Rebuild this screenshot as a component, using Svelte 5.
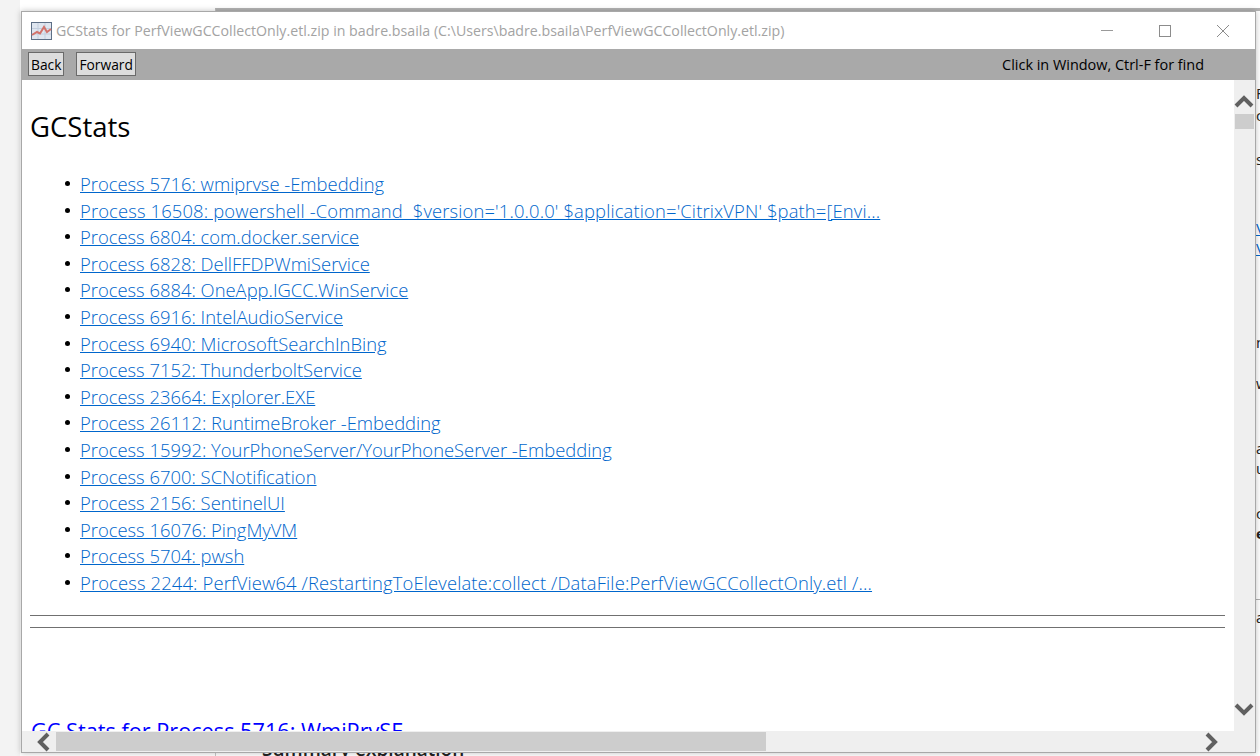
<script lang="ts">
  const processes = [
    "Process 5716: wmiprvse -Embedding",
    "Process 16508: powershell -Command \u00a0$version='1.0.0.0' $application='CitrixVPN' $path=[Envi...",
    "Process 6804: com.docker.service",
    "Process 6828: DellFFDPWmiService",
    "Process 6884: OneApp.IGCC.WinService",
    "Process 6916: IntelAudioService",
    "Process 6940: MicrosoftSearchInBing",
    "Process 7152: ThunderboltService",
    "Process 23664: Explorer.EXE",
    "Process 26112: RuntimeBroker -Embedding",
    "Process 15992: YourPhoneServer/YourPhoneServer -Embedding",
    "Process 6700: SCNotification",
    "Process 2156: SentinelUI",
    "Process 16076: PingMyVM",
    "Process 5704: pwsh",
    "Process 2244: PerfView64 /RestartingToElevelate:collect /DataFile:PerfViewGCCollectOnly.etl /...",
  ];

  // bits of the window behind that stick out on the right edge
  const peeks = [
    { y: 72, text: "F", cls: "" },
    { y: 94, text: "c", cls: "" },
    { y: 138, text: "s", cls: "" },
    { y: 207, text: "V", cls: "link" },
    { y: 227, text: "V", cls: "link" },
    { y: 321, text: "n", cls: "" },
    { y: 362, text: "w", cls: "" },
    { y: 427, text: "a", cls: "" },
    { y: 447, text: "u", cls: "" },
    { y: 492, text: "c", cls: "" },
    { y: 512, text: "e", cls: "bold" },
    { y: 596, text: "a", cls: "" },
  ];
</script>

<div class="desktop">
  <div class="back-left"></div>
  <div class="back-right">
    {#each peeks as p}
      <span class="peek {p.cls}" style="top: {p.y}px">{p.text}</span>
    {/each}
    <div class="back-rule"></div>
  </div>
  <div class="under-text">Summary explanation</div>

  <div class="window">
    <div class="titlebar">
      <svg class="app-icon" width="21" height="18" viewBox="0 0 21 18" aria-hidden="true">
        <rect x="0.5" y="0.5" width="20" height="17" fill="#dfe6f0" stroke="#5d6f86" />
        <path d="M1 6.500h19M1 12h19M7 1v16M14 1v16" stroke="#c3cede" fill="none" />
        <path d="M1 13l5-3 3 1.500 4-6.500 3 5 4-3" stroke="#d2736c" stroke-width="2" fill="none" />
      </svg>
      <span class="title">GCStats for PerfViewGCCollectOnly.etl.zip in badre.bsaila (C:\Users\badre.bsaila\PerfViewGCCollectOnly.etl.zip)</span>
      <div class="controls">
        <svg width="14" height="14" viewBox="0 0 14 14" aria-hidden="true"><path d="M1 6.500h12" stroke="#9a9a9a" /></svg>
        <svg width="14" height="14" viewBox="0 0 14 14" aria-hidden="true"><rect x="1.500" y="1.500" width="11" height="11" fill="none" stroke="#8c8c8c" /></svg>
        <svg width="14" height="14" viewBox="0 0 14 14" aria-hidden="true"><path d="M1 1l12 12M13 1L1 13" stroke="#8c8c8c" /></svg>
      </div>
    </div>

    <div class="toolbar">
      <button>Back</button>
      <button>Forward</button>
      <span class="hint">Click in Window, Ctrl-F for find</span>
    </div>

    <div class="main">
      <div class="content">
        <h2>GCStats</h2>
        <ul>
          {#each processes as name}
            <li class:long={name.length > 80}><a href="#p">{name}</a></li>
          {/each}
        </ul>
        <hr />
        <hr />
        <h3>GC Stats for Process 5716: WmiPrvSE</h3>
      </div>
      <div class="vscroll">
        <svg width="20" height="14" viewBox="0 0 20 14" aria-hidden="true"><path d="M2 12l8-8 8 8" class="chev" /></svg>
        <div class="vthumb"></div>
        <div class="spacer"></div>
        <svg width="20" height="14" viewBox="0 0 20 14" aria-hidden="true"><path d="M2 2l8 8 8-8" class="chev" /></svg>
      </div>
    </div>

    <div class="hscroll">
      <svg width="14" height="20" viewBox="0 0 14 20" aria-hidden="true"><path d="M12 2l-8 8 8 8" class="chev" /></svg>
      <div class="hthumb"></div>
      <div class="spacer"></div>
      <svg width="14" height="20" viewBox="0 0 14 20" aria-hidden="true"><path d="M2 2l8 8-8 8" class="chev" /></svg>
    </div>
  </div>
</div>

<style>
  :global(body) {
    margin: 0;
    background: #fff;
  }
  .desktop {
    position: relative;
    width: 1260px;
    height: 756px;
    overflow: hidden;
    background: #fff;
    font-family: "Open Sans", "Noto Sans", sans-serif;
  }
  .back-left {
    position: absolute;
    left: 0;
    top: 0;
    width: 20px;
    height: 756px;
    background: #f3f3f3;
  }
  .back-right {
    position: absolute;
    left: 215px;
    top: 8px;
    width: 1045px;
    height: 748px;
    border-top: 3px solid #b4b4b4;
    border-left: 1px solid #c8c8c8;
    box-sizing: border-box;
    background: #fff;
  }
  .peek {
    position: absolute;
    left: 1040px;
    font-size: 15px;
    line-height: 20px;
    color: #222;
  }
  .peek.link {
    color: #0066cc;
    text-decoration: underline;
  }
  .peek.bold {
    font-weight: 700;
  }
  .back-rule {
    position: absolute;
    left: 1040px;
    right: 0;
    top: 588px;
    height: 1px;
    background: #b0b0b0;
  }
  .under-text {
    position: absolute;
    left: 262px;
    top: 737px;
    font-size: 19px;
    line-height: 24px;
    font-weight: 600;
    color: #222;
  }
  .window {
    position: absolute;
    left: 21px;
    top: 11px;
    width: 1235px;
    height: 742px;
    box-sizing: border-box;
    border: 1px solid #a8a8a8;
    background: #fff;
    box-shadow: 0 0 6px rgba(0, 0, 0, 0.25);
    display: flex;
    flex-direction: column;
  }
  .titlebar {
    height: 37px;
    flex: none;
    display: flex;
    align-items: center;
    padding-left: 9px;
    background: #fff;
  }
  .app-icon {
    flex: none;
    margin-right: 4px;
  }
  .title {
    font-size: 14.2px;
    color: #a3a3a3;
    white-space: nowrap;
  }
  .controls {
    margin-left: auto;
    display: flex;
    gap: 44px;
    padding-right: 25px;
  }
  .toolbar {
    height: 31px;
    flex: none;
    background: #a9a9a9;
    display: flex;
    align-items: center;
    padding-left: 6px;
    gap: 12px;
  }
  button {
    height: 24px;
    margin-bottom: 1px;
    padding: 0 2px;
    font: inherit;
    font-size: 13.8px;
    color: #000;
    background: #ddd;
    border: 1px solid #6a6a6a;
  }
  .hint {
    margin-left: auto;
    margin-right: 51px;
    font-size: 14.45px;
    color: #000;
  }
  .main {
    flex: 1;
    min-height: 0;
    display: flex;
  }
  .content {
    flex: 1;
    min-width: 0;
    overflow: hidden;
    padding: 0 9px 0 8px;
  }
  h2 {
    margin: 29px 0 0;
    font-size: 27.5px;
    line-height: 36px;
    font-weight: 400;
    color: #000;
  }
  ul {
    margin: 26px 0 0;
    padding-left: 50px;
    list-style: none;
    font-size: 18.4px;
    line-height: 26.6px;
    font-weight: 300;
  }
  li {
    position: relative;
    white-space: nowrap;
  }
  li::before {
    content: "";
    position: absolute;
    left: -15px;
    top: 10px;
    width: 5px;
    height: 5px;
    border-radius: 50%;
    background: #000;
  }
  li.long {
    letter-spacing: 0.14px;
  }
  a {
    color: #0066cc;
  }
  hr {
    margin: 11px 0 0;
    border: 0;
    border-top: 1px solid #707070;
    height: 0;
  }
  ul + hr {
    margin-top: 18px;
  }
  h3 {
    margin: 88px 0 0 1px;
    font-size: 21.7px;
    line-height: 30px;
    font-weight: 400;
    color: #0000ff;
    white-space: nowrap;
  }
  .vscroll {
    width: 21px;
    flex: none;
    background: #efefef;
    display: flex;
    flex-direction: column;
    align-items: center;
    padding-top: 14px;
    padding-bottom: 14px;
  }
  .vscroll svg {
    margin-right: 1px;
  }
  .vthumb {
    width: 19px;
    height: 15px;
    margin-top: 6px;
    background: #cdcdcd;
  }
  .hscroll {
    height: 21px;
    flex: none;
    background: #efefef;
    display: flex;
    align-items: center;
    padding: 0 36px 0 14px;
  }
  .hthumb {
    width: 710px;
    height: 19px;
    margin-left: 6px;
    background: #cdcdcd;
  }
  .spacer {
    flex: 1;
  }
  .chev {
    fill: none;
    stroke: #606060;
    stroke-width: 4;
  }
</style>
